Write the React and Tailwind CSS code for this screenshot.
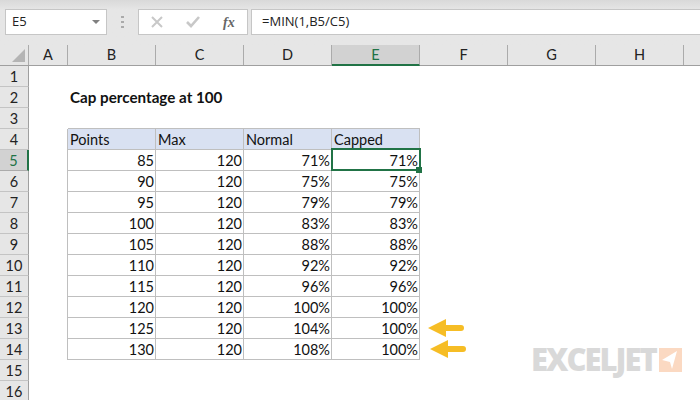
const columns = ["A", "B", "C", "D", "E", "F", "G", "H"];

const rows = [
  [85, 120, "71%", "71%"],
  [90, 120, "75%", "75%"],
  [95, 120, "79%", "79%"],
  [100, 120, "83%", "83%"],
  [105, 120, "88%", "88%"],
  [110, 120, "92%", "92%"],
  [115, 120, "96%", "96%"],
  [120, 120, "100%", "100%"],
  [125, 120, "104%", "100%"],
  [130, 120, "108%", "100%"],
];

const Arrow = ({ className }) => (
  <svg className={className} width="36" height="18" viewBox="0 0 36 18">
    <path d="M0 9 L18 0 V6 H33 a3 3 0 0 1 0 6 H18 V18 Z" fill="#f6bd25" />
  </svg>
);

const RowHead = ({ n, active }) => (
  <div
    className={`w-[29px] h-[21px] pt-[1px] shrink-0 flex items-center justify-center border-r border-b text-[14.5px] ${
      active
        ? "bg-[#d2d2d2] text-[#217346] border-b-[#ababab] border-r-2 border-r-[#217346]"
        : "bg-[#e6e6e6] text-[#222] border-b-[#c4c4c4] border-r-[#9f9f9f]"
    }`}
  >
    {n}
  </div>
);

const Cell = ({ children, header }) => (
  <div
    className={`w-[88px] h-[21px] pt-[1px] shrink-0 flex items-center border-r border-b border-[#bfbfbf] text-[14.5px] text-[#111] ${
      header ? "bg-[#d9e1f2] justify-start pl-[2px]" : "justify-end pr-[1px]"
    }`}
  >
    {children}
  </div>
);

const Spacer = () => <div className="w-[39px] h-[21px] shrink-0 border-r border-[#bfbfbf]" />;

const App = () => {
  return (
    <div className="relative w-[700px] h-[400px] overflow-hidden bg-white font-['Lato',sans-serif]">
      {/* ribbon */}
      <div className="h-[45px] pt-[9px] flex items-start bg-gradient-to-b from-[#d9d9d9] to-[#e6e6e6] to-[22%] font-['Open_Sans',sans-serif] text-[#222]">
        <div className="ml-[5px] w-[102px] h-[26px] flex items-center justify-between bg-white border border-[#c6c6c6] pl-[6px] pr-[6px] text-[13px]">
          <span>E5</span>
          <span className="w-0 h-0 border-x-[4px] border-x-transparent border-t-[4px] border-t-[#808080]" />
        </div>
        <div className="ml-[14px] mt-[7px] w-[3px] flex flex-col gap-[3px]">
          <span className="h-[2px] bg-[#aaa]" />
          <span className="h-[2px] bg-[#aaa]" />
          <span className="h-[2px] bg-[#aaa]" />
        </div>
        <div className="ml-[14px] w-[110px] h-[26px] flex items-center bg-white border border-[#c6c6c6]">
          <svg className="ml-[12px]" width="12" height="12" viewBox="0 0 12 12">
            <path d="M1 1 L11 11 M11 1 L1 11" stroke="#c8c8c8" strokeWidth="2" fill="none" />
          </svg>
          <svg className="ml-[23px]" width="14" height="12" viewBox="0 0 14 12">
            <path d="M1 6 L5 10 L13 1" stroke="#c8c8c8" strokeWidth="2.6" fill="none" />
          </svg>
          <span className="ml-[23px] font-['Liberation_Serif',serif] italic font-bold text-[14px] text-[#666]">fx</span>
        </div>
        <div className="ml-[3px] flex-1 h-[26px] flex items-center bg-white border border-[#c6c6c6] border-r-0 pl-[10px] text-[13px]">
          =MIN(1,B5/C5)
        </div>
      </div>

      {/* column headers */}
      <div className="flex h-[21px] bg-[#e6e6e6] border-b border-[#9f9f9f] text-[14.5px] text-[#222]">
        <div className="relative w-[29px] shrink-0 border-r border-[#ababab]">
          <span className="absolute right-[3px] bottom-[3px] w-0 h-0 border-l-[13px] border-l-transparent border-b-[13px] border-b-[#b4b4b4]" />
        </div>
        {columns.map((c) => (
          <div
            key={c}
            className={`${c === "A" ? "w-[39px]" : "w-[88px]"} shrink-0 flex items-center justify-center border-r border-[#ababab] ${
              c === "E" ? "bg-[#d2d2d2] text-[#217346] border-b-2 border-b-[#217346] h-[21px]" : ""
            }`}
          >
            {c}
          </div>
        ))}
      </div>

      {/* sheet */}
      <div className="relative">
        <div className="flex">
          <RowHead n={1} />
        </div>
        <div className="flex h-[21px]">
          <RowHead n={2} />
          <div className="pl-[41px] flex items-center font-bold text-[15.2px] leading-[21px] text-[#111]">Cap percentage at 100</div>
        </div>
        <div className="flex">
          <RowHead n={3} />
          <div className="w-[39px] shrink-0" />
          <div className="w-[352px] h-[21px] border-b border-[#bfbfbf]" />
        </div>
        <div className="flex">
          <RowHead n={4} />
          <Spacer />
          {["Points", "Max", "Normal", "Capped"].map((h) => (
            <Cell key={h} header>
              {h}
            </Cell>
          ))}
        </div>
        {rows.map((row, i) => (
          <div className="flex" key={i}>
            <RowHead n={i + 5} active={i === 0} />
            <Spacer />
            {row.map((v, j) => (
              <Cell key={j}>{v}</Cell>
            ))}
          </div>
        ))}
        <div className="flex">
          <RowHead n={15} />
        </div>
        <div className="flex">
          <RowHead n={16} />
        </div>

        {/* active cell */}
        <div className="absolute left-[331px] top-[82px] w-[90px] h-[23px] border-2 border-[#217346]">
          <span className="absolute -right-[3px] -bottom-[4px] w-[6px] h-[6px] bg-[#217346]" />
        </div>

        <Arrow className="absolute left-[428px] top-[253px]" />
        <Arrow className="absolute left-[430px] top-[274px]" />

        {/* logo */}
        <div className="absolute left-[531px] top-[275px] flex items-start gap-[3px]">
          <span className="font-['Open_Sans',sans-serif] font-extrabold text-[31px] leading-[36px] tracking-[-2px] text-[#d9d9d9]">
            EXCELJET
          </span>
          <div className="mt-[7px] w-[23px] h-[24px] bg-[#fbd9c2] flex items-center justify-center">
            <svg width="17" height="20" viewBox="0 0 17 20">
              <path d="M0 10 L15 1 L10 19 L8 12 Z" fill="white" />
            </svg>
          </div>
        </div>
      </div>
    </div>
  );
};

export default App;
